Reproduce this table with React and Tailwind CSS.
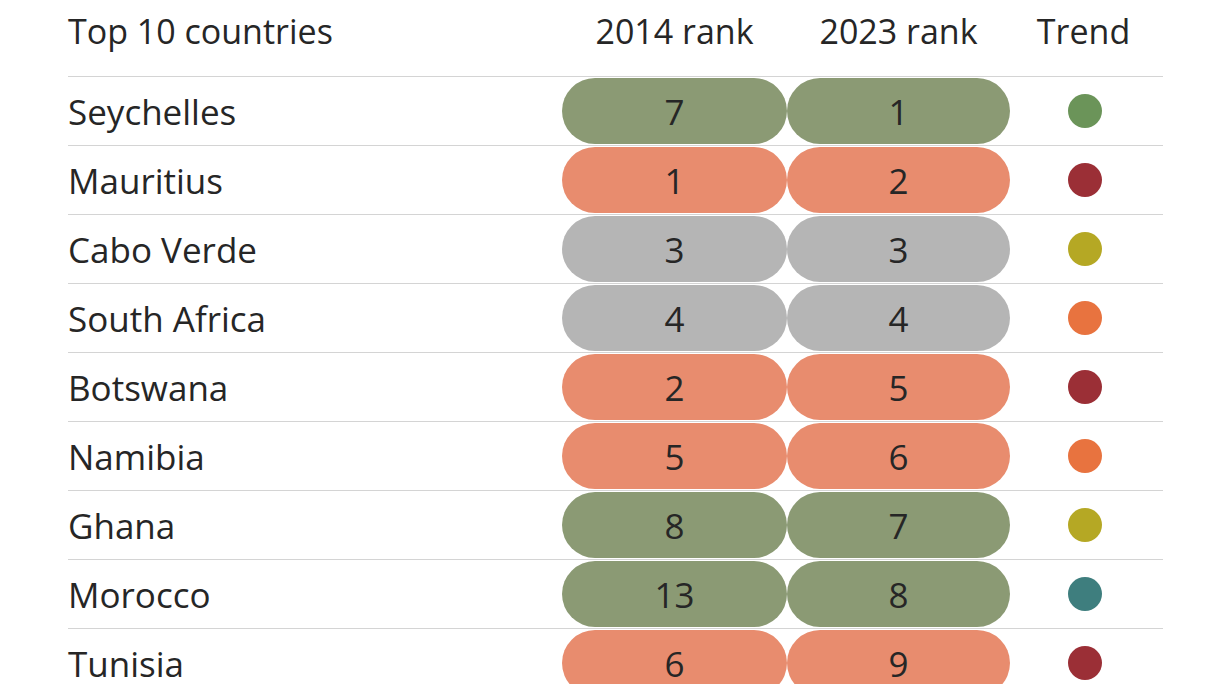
import React from "react";

const G = "bg-[#8b9a74]";
const S = "bg-[#e88c6e]";
const N = "bg-[#b5b5b5]";

const rows = [
  { name: "Seychelles", a: 7, ac: G, b: 1, bc: G, dot: "bg-[#6b9459]" },
  { name: "Mauritius", a: 1, ac: S, b: 2, bc: S, dot: "bg-[#9b2f36]" },
  { name: "Cabo Verde", a: 3, ac: N, b: 3, bc: N, dot: "bg-[#b5a824]" },
  { name: "South Africa", a: 4, ac: N, b: 4, bc: N, dot: "bg-[#e8733f]" },
  { name: "Botswana", a: 2, ac: S, b: 5, bc: S, dot: "bg-[#9b2f36]" },
  { name: "Namibia", a: 5, ac: S, b: 6, bc: S, dot: "bg-[#e8733f]" },
  { name: "Ghana", a: 8, ac: G, b: 7, bc: G, dot: "bg-[#b5a824]" },
  { name: "Morocco", a: 13, ac: G, b: 8, bc: G, dot: "bg-[#3e7e7e]" },
  { name: "Tunisia", a: 6, ac: S, b: 9, bc: S, dot: "bg-[#9b2f36]" },
];

export default function App() {
  return (
    <div className="w-[1216px] h-[684px] overflow-hidden bg-white text-[#262626] font-['Open_Sans','Noto_Sans',sans-serif]">
      <div className="ml-[68px] w-[1095px]">
        <div className="grid grid-cols-[494px_225px_223px_153px] h-[76px] items-center text-[34px] pb-[14px] leading-none">
          <div>Top 10 countries</div>
          <div className="text-center">2014 rank</div>
          <div className="text-center">2023 rank</div>
          <div className="text-center pr-[6px]">Trend</div>
        </div>
        {rows.map((r) => (
          <div
            key={r.name}
            className="grid grid-cols-[494px_225px_223px_153px] h-[69px] border-t border-[#d4d4d4] py-px items-center text-[35px] leading-none"
          >
            <div>{r.name}</div>
            <div className={`h-[66px] rounded-full ${r.ac} flex items-center justify-center`}>{r.a}</div>
            <div className={`h-[66px] rounded-full ${r.bc} flex items-center justify-center`}>{r.b}</div>
            <div className="flex justify-center pr-[4px]">
              <div className={`w-[34px] h-[34px] rounded-full ${r.dot}`} />
            </div>
          </div>
        ))}
      </div>
    </div>
  );
}
